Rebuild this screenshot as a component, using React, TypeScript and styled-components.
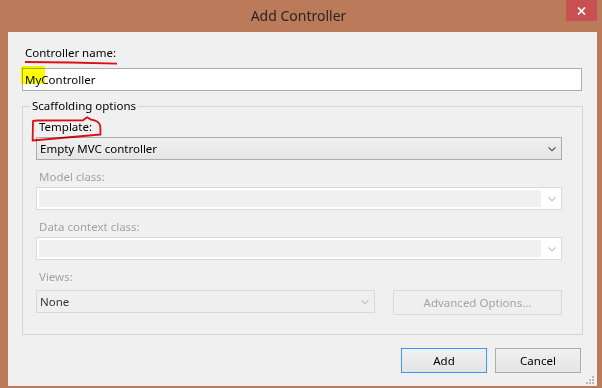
import React from "react";
import styled, { createGlobalStyle } from "styled-components";

const GlobalStyle = createGlobalStyle`
  html, body {
    margin: 0;
    padding: 0;
    background: #ffffff;
  }
  body {
    font-family: "Segoe UI", "Noto Sans", "Open Sans", sans-serif;
    font-size: 11.5px;
    color: #000;
  }
`;

// dropdown arrow used by all combo boxes
function Chevron({ color }: { color: string }) {
  return (
    <svg width="8" height="6" viewBox="0 0 8 6">
      <path d="M0.5 0.5 L4 4 L7.5 0.5 L7.5 2.3 L4 5.6 L0.5 2.3 Z" fill={color} />
    </svg>
  );
}

export default function App() {
  return (
    <>
      <GlobalStyle />
      <Window>
        <TitleBar>
          <span />
          <Title>Add Controller</Title>
          <CloseButton aria-label="Close">
            <svg width="9" height="8" viewBox="0 0 9 8">
              <path d="M1 0.5 L8 7.5 M8 0.5 L1 7.5" stroke="#fff" strokeWidth="1.7" />
            </svg>
          </CloseButton>
        </TitleBar>

        <Client>
          <Label>Controller name:</Label>
          <TextBox readOnly value="MyController" />

          <Group>
            <Legend>Scaffolding options</Legend>
            <Fields>
              <Field>
                <Label>Template:</Label>
                <Select>
                  <SelectText>Empty MVC controller</SelectText>
                  <Chevron color="#505050" />
                </Select>
              </Field>

              <Field>
                <Label $disabled>Model class:</Label>
                <Combo>
                  <ComboEdit />
                  <ComboButton>
                    <Chevron color="#c2c2c2" />
                  </ComboButton>
                </Combo>
              </Field>

              <Field>
                <Label $disabled>Data context class:</Label>
                <Combo>
                  <ComboEdit />
                  <ComboButton>
                    <Chevron color="#c2c2c2" />
                  </ComboButton>
                </Combo>
              </Field>

              <Field>
                <Label $disabled>Views:</Label>
                <ViewsRow>
                  <ViewsSelect>
                    <SelectText>None</SelectText>
                    <Chevron color="#c2c2c2" />
                  </ViewsSelect>
                  <Button $disabled $width={169}>Advanced Options...</Button>
                </ViewsRow>
              </Field>
            </Fields>
          </Group>

          <Actions>
            <Button $default>Add</Button>
            <Button>Cancel</Button>
          </Actions>

          <Grip width="10" height="10" viewBox="0 0 10 10">
            {[
              [7, 1],
              [4, 4],
              [7, 4],
              [1, 7],
              [4, 7],
              [7, 7],
            ].map(([x, y]) => (
              <rect key={`${x}-${y}`} x={x} y={y} width="2" height="2" fill="#b9b9b9" />
            ))}
          </Grip>
        </Client>

        {/* hand drawn markup on the screenshot */}
        <Markup width="602" height="388" viewBox="0 0 602 388">
          <rect x="21" y="66" width="24" height="18" rx="2" fill="#ffff00" />
          <path d="M25 62 Q70 62.2 117 63.6" stroke="#e8101a" strokeWidth="1.8" fill="none" />
          <path
            d="M37 120.5 L33 121 L32.6 140.5 L100.5 134.5 L100.3 126 Q99 120.5 91 119.6 L87 117.3 L83 120.3 L37 120.5"
            stroke="#e8101a"
            strokeWidth="1.8"
            fill="none"
            strokeLinejoin="round"
          />
        </Markup>
      </Window>
    </>
  );
}

const Window = styled.div`
  position: relative;
  width: 602px;
  height: 388px;
  box-sizing: border-box;
  background: #bb7b5b;
  display: flex;
  flex-direction: column;
  padding: 0 5px 2px 8px;
`;

const TitleBar = styled.div`
  height: 32px;
  display: grid;
  grid-template-columns: 1fr auto 1fr;
  align-items: start;
  margin-left: -8px;
  margin-right: -5px;
  padding-right: 5px;
`;

const Title = styled.div`
  font-size: 14px;
  line-height: 32px;
  color: #2a2420;
`;

const CloseButton = styled.div`
  justify-self: end;
  width: 31px;
  height: 21px;
  background: #c75050;
  display: flex;
  align-items: center;
  justify-content: center;
`;

const Client = styled.div`
  position: relative;
  flex: 1;
  background: #f0f0f0;
  display: flex;
  flex-direction: column;
  padding: 13px 14px 0 14px;
`;

const Label = styled.div<{ $disabled?: boolean }>`
  height: 16px;
  line-height: 16px;
  font-size: 11.5px;
  color: ${({ $disabled }) => ($disabled ? "#a3a3a3" : "#000")};
  padding-left: 3px;
`;

const TextBox = styled.input`
  margin: 7px 0 0 0;
  height: 23px;
  box-sizing: border-box;
  width: 560px;
  border: 1px solid #abadb3;
  background: #fff;
  padding: 0 2px;
  font: inherit;
  font-size: 11.5px;
  color: #000;
  outline: none;
`;

const Group = styled.fieldset`
  margin: 7px 0 0 0;
  width: 561px;
  box-sizing: border-box;
  border: 1px solid #d5d5d5;
  padding: 5px 20px 19px 13px;
  min-width: 0;
`;

const Legend = styled.legend`
  margin-left: -6px;
  padding: 0 2px;
  line-height: 16px;
  font-size: 11.5px;
  color: #000;
`;

const Fields = styled.div`
  display: flex;
  flex-direction: column;
  gap: 9px;
`;

const Field = styled.div`
  display: flex;
  flex-direction: column;
  gap: 2px;
`;

const Select = styled.div`
  height: 23px;
  box-sizing: border-box;
  border: 1px solid #acacac;
  background: linear-gradient(#f0f0f0, #e5e5e5);
  display: flex;
  align-items: center;
  padding: 0 5px 0 3px;
`;

const SelectText = styled.span`
  flex: 1;
  font-size: 11.5px;
  color: #000;
`;

const Combo = styled.div`
  height: 23px;
  box-sizing: border-box;
  border: 1px solid #d9d9d9;
  background: #fff;
  padding: 2px 0 2px 2px;
  display: flex;
`;

const ComboEdit = styled.div`
  flex: 1;
  background: #f0f0f0;
`;

const ComboButton = styled.div`
  width: 19px;
  display: flex;
  align-items: center;
  justify-content: center;
  padding-left: 1px;
`;

const ViewsRow = styled.div`
  display: flex;
  justify-content: space-between;
  align-items: flex-start;
  margin-top: 3px;
`;

const ViewsSelect = styled(Select)`
  width: 339px;
  border-color: #d9d9d9;
  background: #efefef;

  ${SelectText} {
    color: #333;
  }
`;

const Button = styled.div<{ $default?: boolean; $disabled?: boolean; $width?: number }>`
  width: ${({ $width }) => $width ?? 86}px;
  height: 25px;
  box-sizing: border-box;
  border: 1px solid
    ${({ $default, $disabled }) => ($default ? "#3399ff" : $disabled ? "#d9d9d9" : "#acacac")};
  background: ${({ $disabled }) => ($disabled ? "#efefef" : "linear-gradient(#f0f0f0, #e5e5e5)")};
  color: ${({ $disabled }) => ($disabled ? "#a3a3a3" : "#000")};
  font-size: 11.5px;
  display: flex;
  align-items: center;
  justify-content: center;
`;

const Actions = styled.div`
  display: flex;
  justify-content: flex-end;
  gap: 8px;
  margin-top: 13px;
  padding-right: 2px;
`;

const Grip = styled.svg`
  position: absolute;
  right: 2px;
  bottom: 1px;
`;

const Markup = styled.svg`
  position: absolute;
  left: 0;
  top: 0;
  pointer-events: none;
  mix-blend-mode: multiply;
`;
